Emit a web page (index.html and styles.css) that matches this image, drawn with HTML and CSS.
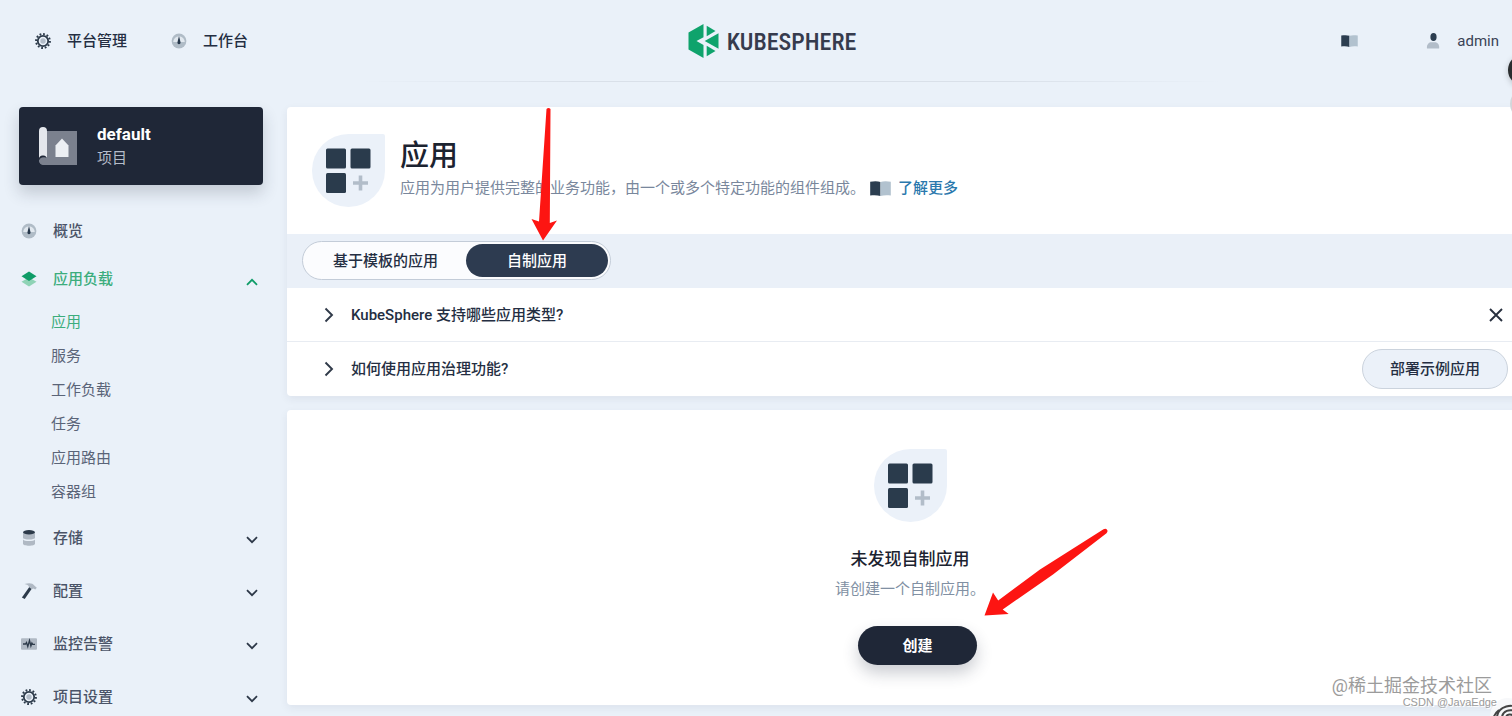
FILE: index.html
```html
<!DOCTYPE html>
<html lang="zh-CN">
<head>
<meta charset="utf-8">
<title>KubeSphere</title>
<link rel="stylesheet" href="styles.css">
</head>
<body>
<svg class="defs" aria-hidden="true">
  <symbol id="gear" viewBox="0 0 16 16">
    <circle cx="8" cy="8" r="6.900" fill="none" stroke="#2c3a4a" stroke-width="2" stroke-dasharray="1.800 1.800"/>
    <circle cx="8" cy="8" r="5.200" fill="none" stroke="#2c3a4a" stroke-width="1.800"/>
    <circle cx="8" cy="8" r="2.700" fill="#b3bdc9"/>
  </symbol>
  <symbol id="gauge" viewBox="0 0 16 16">
    <circle cx="8" cy="8" r="7.400" fill="#b0bcc7"/>
    <path d="M2.200 9a5.800 5.800 0 0 1 11.600 0z" fill="#e1e8ef"/>
    <path d="M8 3l1.300 5.200c.8 2-.2 3-1.300 3s-2.100-1-1.300-3z" fill="#25364a"/>
  </symbol>
  <symbol id="book" viewBox="0 0 22 16">
    <path d="M0 .8C4 0 8 0 11 1v15c-3-1-7-1-11-.6z" fill="#2c3e50"/>
    <path d="M11 1c3-1 7-1 11-.2v14.600c-4-.4-8-.4-11 .6z" fill="#b2c2cf"/>
  </symbol>
  <symbol id="down" viewBox="0 0 12 8"><path d="M1 1.200l5 5 5-5" fill="none" stroke="currentColor" stroke-width="1.800"/></symbol>
  <symbol id="right" viewBox="0 0 10 16"><path d="M1.500 1.500L8 8l-6.500 6.500" fill="none" stroke="#303a49" stroke-width="1.900"/></symbol>
  <symbol id="apps" viewBox="0 0 73 73">
    <path d="M36.500 0H71a2 2 0 0 1 2 2v34.500A36.500 36.500 0 1 1 36.500 0z" fill="#ebf1f9"/>
    <g fill="#2a3b4c"><rect x="14" y="14.500" width="20" height="20" rx="1.500"/><rect x="38.500" y="14.500" width="20" height="20" rx="1.500"/><rect x="14" y="39" width="20" height="20" rx="1.500"/></g>
    <path d="M48.500 41.500v15M41 49h15" stroke="#b2bdc9" stroke-width="3.600"/>
  </symbol>
</svg>

<div class="app">
  <header class="topbar">
    <nav class="topnav">
      <a href="#"><svg class="ic"><use href="#gear"/></svg>平台管理</a>
      <a href="#"><svg class="ic"><use href="#gauge"/></svg>工作台</a>
    </nav>
    <a class="logo" href="#">
      <svg viewBox="0 0 30 34">
        <path d="M15 0v13.200L8 17l7 4v13L0 25.500v-17z" fill="#0fa36c"/>
        <path d="M18.200 1.800L27 6.900l-8.800 5.300z" fill="#0fa36c"/>
        <path d="M30 9.200v15.600L16.200 17z" fill="#0fa36c"/>
        <path d="M18.200 21.800l8.800 5.300-8.800 5.100z" fill="#0fa36c"/>
      </svg>
      <span>KUBESPHERE</span>
    </a>
    <div class="tools">
      <a href="#" aria-label="文档"><svg class="book-sm"><use href="#book"/></svg></a>
      <button class="user" type="button">
        <svg viewBox="0 0 14 16"><ellipse cx="7.500" cy="4" rx="3.100" ry="4" fill="#2c3e50"/><path d="M1 15.500c-.6-3 1.200-5.800 3.500-6.300h5.200c2.300.5 3.900 2.800 3.500 6.300z" fill="#b2bdc9"/></svg>
        admin
      </button>
    </div>
  </header>
  <div class="rule"></div>

  <div class="body">
    <aside class="side">
      <div class="project">
        <svg viewBox="0 0 38 38">
          <path d="M8 4h30v34H5a5 5 0 0 1-5-5h8z" fill="#7b818e"/>
          <path d="M0 33V4a4 4 0 0 1 8 0v28a4 4 0 0 0-8 1z" fill="#e4e7ec"/>
          <path d="M0 34a5 4 0 0 1 8-3v7H5a5 5 0 0 1-5-4z" fill="#7b818e"/>
          <path d="M23 11.500l6.500 7V30h-13V18.500z" fill="#eceff3"/>
        </svg>
        <div><strong>default</strong><span>项目</span></div>
      </div>
      <nav class="menu">
        <a class="item tight" href="#"><svg class="ic"><use href="#gauge"/></svg><span>概览</span></a>
        <button class="item tight on" type="button">
          <svg class="ic" viewBox="0 0 16 16"><path d="M8 6.500l7.500 4.200L8 15.500.5 10.700z" fill="#8fd3b6"/><path d="M8 .5l7.500 4.700L8 9.900.5 5.200z" fill="#0f9c68"/></svg>
          <span>应用负载</span><svg class="chev up"><use href="#down"/></svg>
        </button>
        <ul class="sub">
          <li><a class="on" href="#">应用</a></li>
          <li><a href="#">服务</a></li>
          <li><a href="#">工作负载</a></li>
          <li><a href="#">任务</a></li>
          <li><a href="#">应用路由</a></li>
          <li><a href="#">容器组</a></li>
        </ul>
        <button class="item" type="button">
          <svg class="ic" viewBox="0 0 16 16"><path d="M2 9.500v4.300c0 2.600 12 2.600 12 0V9.500c-1 2-11 2-12 0z" fill="#b0b9c4"/><path d="M2 2.500v5.300c0 2.400 12 2.400 12 0V2.500z" fill="#b0b9c4"/><ellipse cx="8" cy="2.300" rx="6" ry="2.200" fill="#2c3a4a"/></svg>
          <span>存储</span><svg class="chev"><use href="#down"/></svg>
        </button>
        <button class="item" type="button">
          <svg class="ic" viewBox="0 0 16 16"><path d="M8.500 3.800L.9 14.400l2.800 1.600L10.900 5.500z" fill="#2c3a4a"/><path d="M3.500 1C8-.5 12 .2 13 2.200l2.800 2.600-1.500 1.600-2-1-1.500.8-2.600-2C7.500 2.400 6 1.500 3.500 1z" fill="#b0b9c4"/></svg>
          <span>配置</span><svg class="chev"><use href="#down"/></svg>
        </button>
        <button class="item" type="button">
          <svg class="ic" viewBox="0 0 16 16"><rect y="2.200" width="16" height="11.600" rx="1" fill="#b0b9c4"/><path d="M2 8h2.500l1-1.500 1.300 4 1.700-6 1.400 5.500 1-3 .8 1.300H14" fill="none" stroke="#2c3a4a" stroke-width="1.300"/></svg>
          <span>监控告警</span><svg class="chev"><use href="#down"/></svg>
        </button>
        <button class="item" type="button">
          <svg class="ic"><use href="#gear"/></svg>
          <span>项目设置</span><svg class="chev"><use href="#down"/></svg>
        </button>
      </nav>
    </aside>

    <main class="main">
      <section class="panel">
        <div class="head">
          <svg class="apps"><use href="#apps"/></svg>
          <div>
            <h1>应用</h1>
            <p>应用为用户提供完整的业务功能，由一个或多个特定功能的组件组成。<a href="#"><svg class="book"><use href="#book"/></svg>了解更多</a></p>
          </div>
        </div>
        <div class="strip">
          <div class="tabs">
            <button type="button">基于模板的应用</button>
            <button class="active" type="button">自制应用</button>
          </div>
        </div>
        <div class="tip">
          <svg class="arrow"><use href="#right"/></svg><h2>KubeSphere 支持哪些应用类型?</h2>
          <button class="close" type="button" aria-label="关闭"><svg viewBox="0 0 14 14"><path d="M1 1l12 12M13 1L1 13" stroke="#28303f" stroke-width="1.900"/></svg></button>
        </div>
        <div class="tip">
          <svg class="arrow"><use href="#right"/></svg><h2>如何使用应用治理功能?</h2>
          <button class="deploy" type="button">部署示例应用</button>
        </div>
      </section>
      <section class="panel empty">
        <svg class="apps"><use href="#apps"/></svg>
        <h2>未发现自制应用</h2>
        <p>请创建一个自制应用。</p>
        <button class="create" type="button">创建</button>
      </section>
    </main>
  </div>

  <svg class="mark mark-tab" viewBox="0 0 28 134"><path d="M15.500 2Q17.500 0 19.500 2L18.800 116l7.200-2.500L12 133.500.5 112l7.500 2.500z" fill="#fd1512"/></svg>
  <svg class="mark mark-create" viewBox="0 0 126 90"><path d="M119.500 1.300c3-1.800 5.500 1.400 3 4L69 46.500 18.700 81.500l6 4.500L.5 87.500 9 64.500l5.200 8L56 41.500z" fill="#fd1512"/></svg>
  <div class="float float-dark"></div>
  <div class="float float-light"></div>
  <svg class="badge" viewBox="0 0 36 36"><circle cx="18" cy="18" r="18" fill="#f7f8fa"/><path d="M3 24c0-6 2-9 6-12M7 26v-6C7 8 24 4 30 12M12 26v-6c0-7 8-10 14-6M16 26v-6c0-4 6-5 8-1" fill="none" stroke="#444" stroke-width="2"/></svg>
  <div class="credit">@稀土掘金技术社区</div>
  <div class="credit-sm">CSDN @JavaEdge</div>
</div>
</body>
</html>
```
FILE: styles.css
```css
* { box-sizing: border-box; }
body {
  margin: 0;
  background: #eaf1f9;
  color: #242e42;
  font: 15px/22px Roboto, "Noto Sans CJK SC", sans-serif;
}
h1, h2, p, ul { margin: 0; padding: 0; }
a { color: inherit; text-decoration: none; }
button { border: 0; background: none; padding: 0; color: inherit; font: inherit; }
svg { display: block; flex: none; }
.defs { position: absolute; width: 0; height: 0; }
.app { position: relative; height: 100vh; overflow: hidden; }
.ic { width: 16px; height: 16px; }

.topbar {
  display: grid;
  grid-template-columns: 1fr auto 1fr;
  align-items: center;
  height: 82px;
  padding: 0 13px 0 35px;
}
.topnav { display: flex; gap: 44px; font-weight: 500; }
.topnav a { display: flex; align-items: center; gap: 16px; }
.logo { display: flex; align-items: center; gap: 8px; margin-left: 10px; }
.logo svg { width: 31px; height: 34px; }
.logo span {
  padding-top: 2px;
  font: 500 24px/34px "Liberation Sans Narrow", "Roboto Condensed", sans-serif;
  color: #363b4d;
}
.tools { display: flex; justify-content: flex-end; align-items: center; gap: 68px; color: #3a4356; }
.book-sm { width: 17px; height: 12px; }
.user { display: flex; align-items: center; gap: 17px; }
.user svg { width: 14px; height: 16px; }
.rule {
  height: 1px;
  margin: -1px 290px 0 360px;
  background: linear-gradient(90deg, transparent, #d9e0e9 25%, #d9e0e9 75%, transparent);
}

.body { display: flex; padding-top: 25px; margin-right: -21px; }
.side { flex: none; width: 287px; padding: 0 24px 0 19px; }
.project {
  display: flex;
  align-items: center;
  gap: 20px;
  height: 78px;
  padding-left: 20px;
  border-radius: 4px;
  background: #1f2737;
  box-shadow: 0 8px 16px rgba(36, 46, 66, .2);
}
.project svg { width: 38px; height: 38px; }
.project strong, .project span { display: block; line-height: 24px; }
.project strong { color: #fff; font-size: 17px; font-weight: 700; }
.project span { color: #b5bcc9; }

.menu { padding-top: 22px; }
.item {
  display: flex;
  align-items: center;
  gap: 16px;
  width: 100%;
  height: 53px;
  padding: 0 5px 0 2px;
  text-align: left;
  font-weight: 500;
  color: #4a5468;
}
.item.tight { height: 48px; }
.item span { flex: 1; }
.chev { width: 12px; height: 8px; margin-top: 5px; color: #2d3848; }
.up { transform: rotate(180deg); }
.sub { list-style: none; padding: 2px 0 2px 32px; color: #5a6478; }
.sub a { display: block; line-height: 34px; }
.menu .on { color: #3cad7d; }
.on .chev { color: #0f9c68; }

.main { flex: 1; min-width: 0; }
.panel { border-radius: 4px; background: #fff; box-shadow: 0 3px 8px rgba(36, 46, 66, .07); }
.apps { width: 73px; height: 73px; }
.head { display: flex; gap: 15px; padding: 27px 25px; }
h1 { padding-top: 1px; font-size: 29px; line-height: 42px; font-weight: 500; color: #1c2330; }
.head p { display: flex; align-items: center; gap: 5px; color: #79879c; }
.head p a { display: flex; align-items: center; gap: 7px; color: #2a78ad; font-weight: 500; }
.book { width: 21px; height: 15px; }
.strip { padding: 7px 15px 8px; background: #eaf0f8; }
.tabs {
  display: inline-flex;
  padding: 2px;
  border: 1px solid #c3ccd8;
  border-radius: 20px;
  background: #fbfcfe;
  vertical-align: top;
}
.tabs button { height: 33px; padding: 0 28px; border-radius: 17px; font-weight: 500; }
.tabs .active { padding: 0 41px; background: #2d3b50; color: #fff; }
.tip { display: flex; align-items: center; height: 53px; padding: 0 25px 0 37px; }
.tip + .tip { height: 55px; border-top: 1px solid #e8ecf2; }
.arrow { width: 10px; height: 16px; margin-right: 17px; }
.tip h2 { flex: 1; font-size: 15px; font-weight: 500; }
.close { display: grid; place-items: center; width: 24px; height: 24px; }
.close svg { width: 14px; height: 14px; }
.deploy {
  height: 40px;
  padding: 0 27px;
  border: 1px solid #cbd3dd;
  border-radius: 20px;
  background: #ebf1f9;
  font-weight: 500;
}
.empty { display: flex; flex-direction: column; align-items: center; margin-top: 14px; padding: 39px 0 40px; }
.empty h2 { margin-top: 24px; font-size: 17px; line-height: 26px; font-weight: 500; color: #1c2330; }
.empty p { margin-top: 6px; color: #8190a3; }
.create {
  height: 39px;
  margin: 26px 0 0 15px;
  padding: 0 44px;
  border-radius: 20px;
  background: #1f2737;
  color: #fff;
  font-weight: 700;
  box-shadow: 0 8px 16px rgba(36, 46, 66, .24);
}

.mark { position: absolute; }
.mark-tab { left: 531px; top: 107px; width: 28px; height: 134px; }
.mark-create { left: 984px; top: 528px; width: 126px; height: 90px; }
.float { position: absolute; width: 40px; height: 32px; border-radius: 16px; }
.float-dark { right: -36px; top: 54px; background: #2a2d2f; box-shadow: 0 2px 6px rgba(0, 0, 0, .2); }
.float-light { right: -38px; top: 88px; border: 2px solid #d3d6da; background: #f3f4f6; }
.badge { position: absolute; right: -14px; bottom: -18px; width: 36px; height: 36px; }
.credit, .credit-sm { position: absolute; white-space: nowrap; color: #9b9b9b; text-shadow: 1px 1px 0 #fff; }
.credit { right: 20px; bottom: 17px; font-size: 18px; line-height: 26px; font-weight: 400; }
.credit-sm { right: 15px; bottom: 6px; font: 11px/16px "Liberation Sans", sans-serif; }
```
